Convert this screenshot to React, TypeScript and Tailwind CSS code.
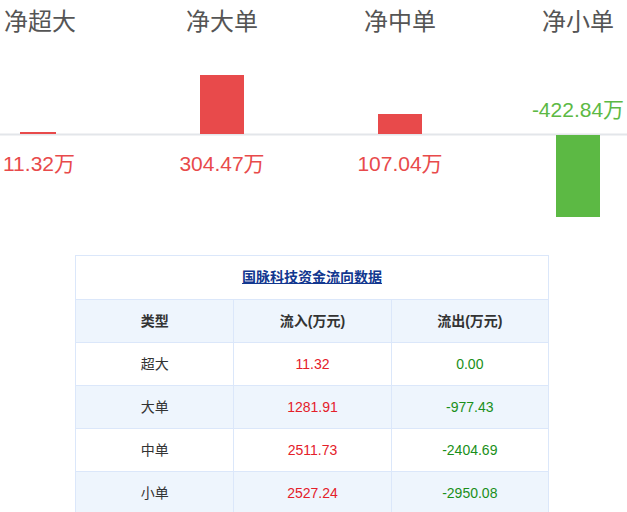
import React from "react";

const rows = [
  ["超大", "11.32", "0.00"],
  ["大单", "1281.91", "-977.43"],
  ["中单", "2511.73", "-2404.69"],
  ["小单", "2527.24", "-2950.08"],
];

export default function App() {
  const f = '"Liberation Sans", "Noto Sans CJK SC", sans-serif';
  return (
    <div className="w-[627px] h-[512px] bg-white overflow-hidden" style={{ fontFamily: f }}>
      <svg width="627" height="240" className="block">
        <g fontSize="24" fill="#555" textAnchor="middle" fontFamily={f}>
          <text x="40" y="30">净超大</text>
          <text x="222" y="30">净大单</text>
          <text x="400" y="30">净中单</text>
          <text x="578" y="30">净小单</text>
        </g>
        <line x1="0" y1="134.5" x2="627" y2="134.5" stroke="#e3e6ea" strokeWidth="2" />
        <rect x="20" y="132" width="36" height="2" fill="#e84a4b" />
        <rect x="200" y="75" width="44" height="59" fill="#e84a4b" />
        <rect x="378" y="114" width="44" height="20" fill="#e84a4b" />
        <rect x="556" y="135" width="44" height="82" fill="#5cb944" />
        <g fontSize="21" fill="#e84a4b" textAnchor="middle" fontFamily={f}>
          <text x="39" y="171">11.32万</text>
          <text x="222" y="171">304.47万</text>
          <text x="400" y="171">107.04万</text>
        </g>
        <text x="578" y="117" fontSize="21" fill="#5cb944" textAnchor="middle" fontFamily={f}>-422.84万</text>
      </svg>
      <div className="ml-[75px] mt-[15px] w-[474px] border border-[#dbe7fa] text-[14px]">
        <div className="h-[43px] flex items-center justify-center">
          <span className="font-bold text-[#12378f] underline">国脉科技资金流向数据</span>
        </div>
        <div className="grid grid-cols-3 h-[43px] bg-[#eef5fd] border-t border-[#dbe7fa] font-bold text-[#333]">
          <div className="flex items-center justify-center">类型</div>
          <div className="flex items-center justify-center border-l border-[#dbe7fa]">流入(万元)</div>
          <div className="flex items-center justify-center border-l border-[#dbe7fa]">流出(万元)</div>
        </div>
        {rows.map((r, i) => (
          <div key={i} className={`grid grid-cols-3 h-[43px] border-t border-[#dbe7fa] ${i % 2 ? "bg-[#eef5fd]" : "bg-white"}`}>
            <div className="flex items-center justify-center text-[#333]">{r[0]}</div>
            <div className="flex items-center justify-center border-l border-[#dbe7fa] text-[#e4202a]">{r[1]}</div>
            <div className="flex items-center justify-center border-l border-[#dbe7fa] text-[#1a8f1a]">{r[2]}</div>
          </div>
        ))}
      </div>
    </div>
  );
}
